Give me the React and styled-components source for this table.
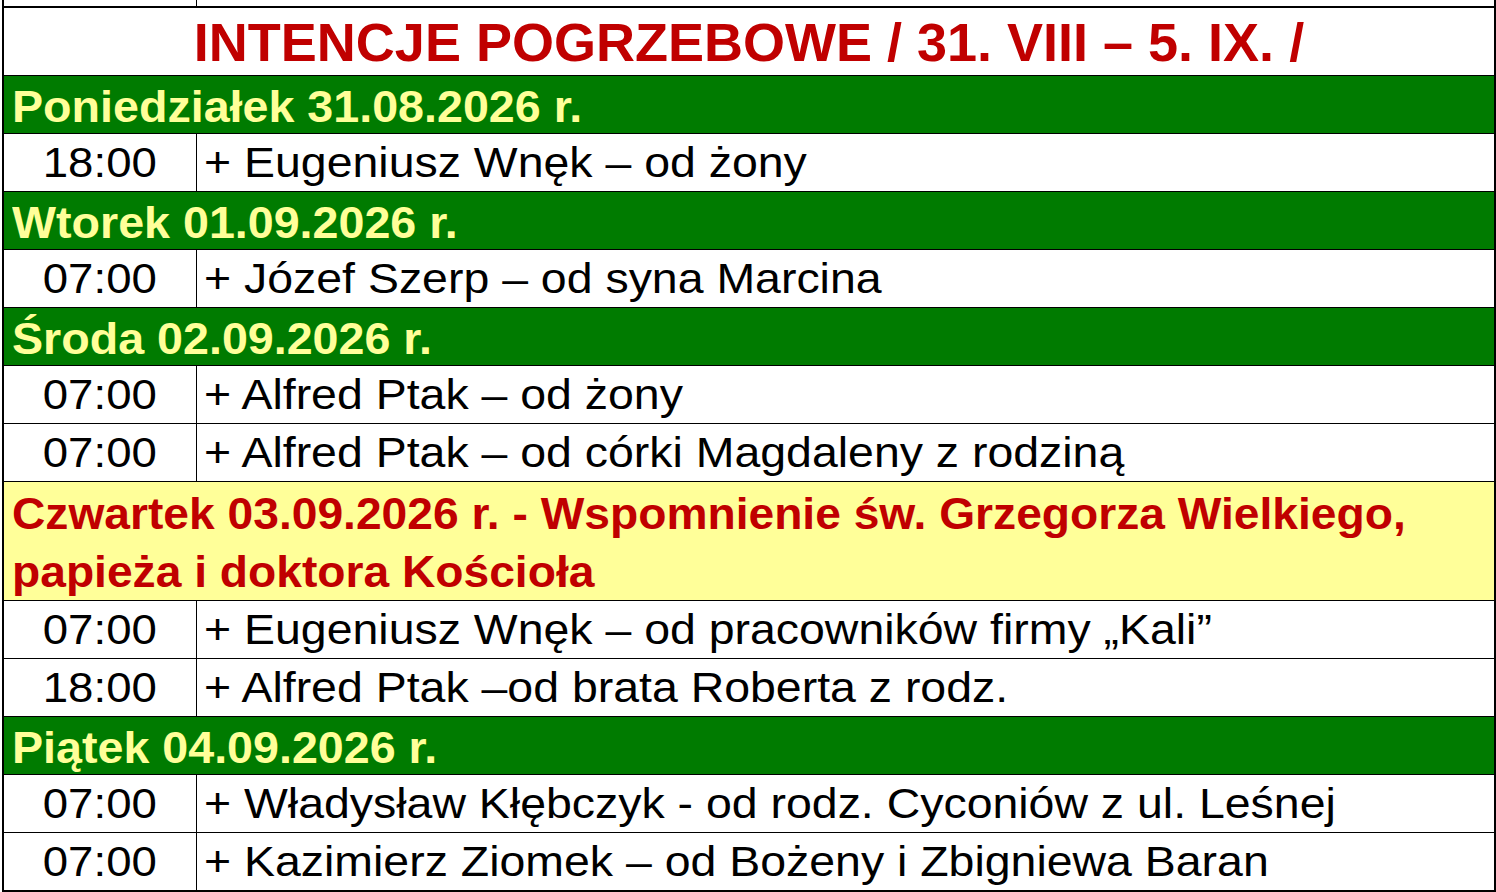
import React from "react";
import styled, { createGlobalStyle } from "styled-components";

const GlobalStyle = createGlobalStyle`
  html, body {
    margin: 0;
    padding: 0;
    background: #ffffff;
  }
  body {
    font-family: "Liberation Sans", Arial, sans-serif;
    overflow: hidden;
  }
  * {
    box-sizing: border-box;
  }
`;

const schedule = [
  {
    day: ["Poniedziałek 31.08.2026 r."],
    masses: [["18:00", "+ Eugeniusz Wnęk – od żony"]],
  },
  {
    day: ["Wtorek 01.09.2026 r."],
    masses: [["07:00", "+ Józef Szerp – od syna Marcina"]],
  },
  {
    day: ["Środa 02.09.2026 r."],
    masses: [
      ["07:00", "+ Alfred Ptak – od żony"],
      ["07:00", "+ Alfred Ptak – od córki Magdaleny z rodziną"],
    ],
  },
  {
    day: [
      "Czwartek 03.09.2026 r. - Wspomnienie św. Grzegorza Wielkiego,",
      "papieża i doktora Kościoła",
    ],
    feast: true,
    masses: [
      ["07:00", "+ Eugeniusz Wnęk – od pracowników firmy „Kali”"],
      ["18:00", "+ Alfred Ptak –od brata Roberta z rodz."],
    ],
  },
  {
    day: ["Piątek 04.09.2026 r."],
    masses: [
      ["07:00", "+ Władysław Kłębczyk - od rodz. Cyconiów z ul. Leśnej"],
      ["07:00", "+ Kazimierz Ziomek – od Bożeny i Zbigniewa Baran"],
    ],
  },
];

const App = () => {
  return (
    <>
      <GlobalStyle />
      <Page>
        <Table>
          <Stub>
            <StubTime />
          </Stub>
          <Title>INTENCJE POGRZEBOWE / 31. VIII – 5. IX. /</Title>
          {schedule.map((d) => (
            <React.Fragment key={d.day[0]}>
              <DayRow feast={d.feast}>
                {d.day.map((line) => (
                  <Line key={line}>
                    <Stretch sx={d.feast ? 1.026 : 1.036}>{line}</Stretch>
                  </Line>
                ))}
              </DayRow>
              {d.masses.map(([time, text], i) => (
                <MassRow key={i}>
                  <Time>
                    <Stretch sx={1.06} origin="center">
                      {time}
                    </Stretch>
                  </Time>
                  <Intention>
                    <Stretch sx={1.08}>{text}</Stretch>
                  </Intention>
                </MassRow>
              ))}
            </React.Fragment>
          ))}
          <BottomStub />
        </Table>
      </Page>
    </>
  );
};

const Page = styled.div`
  padding-left: 2px;
  width: 1496px;
  height: 892px;
  overflow: hidden;
`;

const Table = styled.div`
  width: 1494px;
  display: flex;
  flex-direction: column;
  border-left: 2px solid #000;
  border-right: 2px solid #000;
`;

const Stub = styled.div`
  height: 6px;
  display: flex;
`;

const StubTime = styled.div`
  width: 193px;
  border-right: 1px solid #000;
`;

const Title = styled.div`
  height: 70px;
  border-top: 2px solid #000;
  border-bottom: 1px solid #000;
  padding-top: 1px;
  text-align: center;
  color: #c00000;
  font-weight: 700;
  font-size: 54px;
  line-height: 66px;
  white-space: nowrap;
`;

const Stretch = styled.span`
  display: inline-block;
  white-space: nowrap;
  transform: scaleX(${(p) => p.sx});
  transform-origin: ${(p) => p.origin || "left"} center;
`;

const Line = styled.div`
  white-space: nowrap;
`;

const DayRow = styled.div`
  border-bottom: 1px solid #000;
  background: ${(p) => (p.feast ? "#ffff99" : "#007b00")};
  color: ${(p) => (p.feast ? "#c00000" : "#ffff99")};
  font-weight: 700;
  font-size: 45px;
  line-height: ${(p) => (p.feast ? "58px" : "57px")};
  padding: ${(p) => (p.feast ? "3px 8px 0 8px" : "2px 8px 0 8px")};
  height: ${(p) => (p.feast ? "119px" : "58px")};
`;

const MassRow = styled.div`
  height: 58px;
  display: flex;
  border-bottom: 1px solid #000;
  font-size: 43px;
  line-height: 57px;
  color: #000;
`;

const Time = styled.div`
  width: 193px;
  flex-shrink: 0;
  border-right: 1px solid #000;
  text-align: center;
`;

const Intention = styled.div`
  flex: 1;
  padding-left: 7px;
  white-space: nowrap;
`;

const BottomStub = styled.div`
  height: 4px;
  border-top: 1px solid #000;
  background: #ffff99;
`;

export default App;
